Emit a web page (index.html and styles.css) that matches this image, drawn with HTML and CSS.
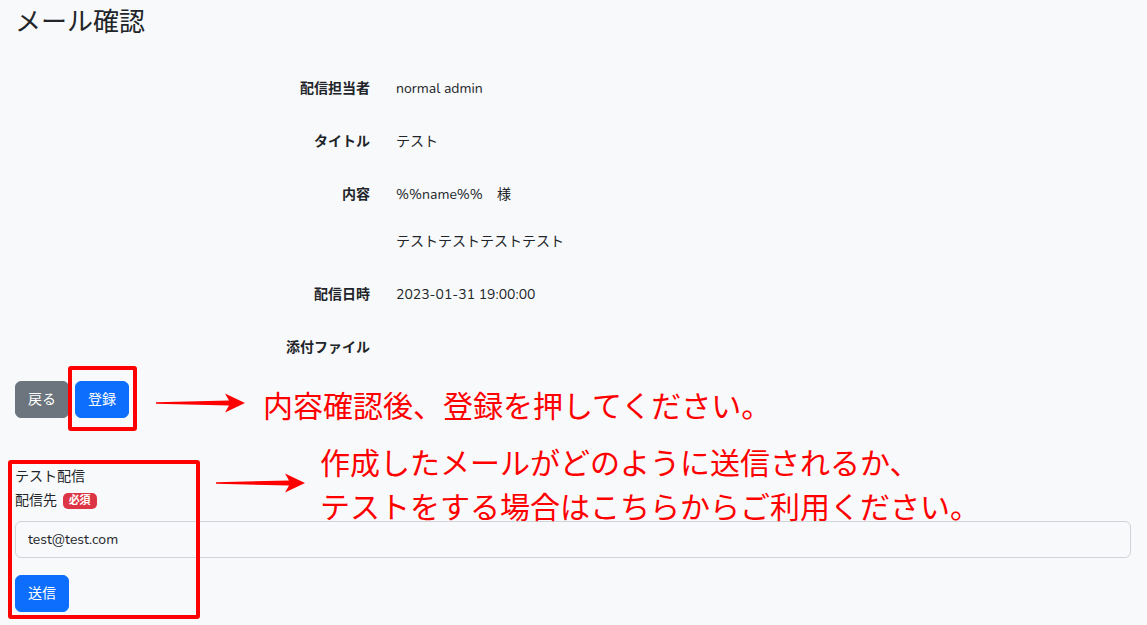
FILE: index.html
```html
<!DOCTYPE html>
<html lang="ja">
<head>
  <meta charset="UTF-8">
  <title>メール確認</title>
  <link rel="stylesheet" href="styles.css">
</head>
<body>

  <h1 class="page-title">メール確認</h1>

  <div class="confirm-list">
    <div class="label">配信担当者</div>
    <div class="value">normal admin</div>

    <div class="label">タイトル</div>
    <div class="value">テスト</div>

    <div class="label">内容</div>
    <div class="value">
      <p>%%name%%　様</p>
      <p>テストテストテストテスト</p>
    </div>

    <div class="label">配信日時</div>
    <div class="value">2023-01-31 19:00:00</div>

    <div class="label">添付ファイル</div>
    <div class="value"></div>
  </div>

  <div class="actions">
    <button class="btn btn-gray">戻る</button>
    <button class="btn btn-blue">登録</button>
  </div>

  <div class="test-send">
    <div class="line">テスト配信</div>
    <div class="line">配信先 <span class="badge">必須</span></div>
    <input type="text" class="input" value="test@test.com">
    <button class="btn btn-blue send">送信</button>
  </div>

  <!-- 注釈 -->
  <div class="mark mark-register"></div>
  <div class="mark mark-test"></div>

  <svg class="arrow arrow-1" width="90" height="22" viewBox="0 0 90 22">
    <path d="M0 10.2 L73 8.6 L69 1.5 L89 11 L69 20.5 L73 13.4 L0 11.8 Z" fill="#ff0000"/>
  </svg>
  <svg class="arrow arrow-2" width="90" height="22" viewBox="0 0 90 22">
    <path d="M0 10.2 L73 8.6 L69 1.5 L89 11 L69 20.5 L73 13.4 L0 11.8 Z" fill="#ff0000"/>
  </svg>

  <p class="note note-1">内容確認後、登録を押してください。</p>
  <p class="note note-2">作成したメールがどのように送信されるか、<br>テストをする場合はこちらからご利用ください。</p>

</body>
</html>
```

FILE: styles.css
```css
body {
  margin: 0;
  padding: 0 16px 20px 15px;
  background: #f8f9fa;
  color: #212529;
  font-family: "Nunito", "Lato", "Noto Sans CJK JP", sans-serif;
  font-size: 14px;
  line-height: 1.5;
  position: relative;
  min-height: 625px;
  box-sizing: border-box;
}

.page-title {
  margin: 0;
  padding-top: 7px;
  font-size: 26px;
  font-weight: 400;
  line-height: 31px;
}

.confirm-list {
  display: grid;
  grid-template-columns: 355px 1fr;
  column-gap: 26px;
  row-gap: 32px;
  margin-top: 40px;
  margin-bottom: 23px;
}

.label {
  text-align: right;
  font-weight: 700;
  line-height: 21px;
  min-height: 21px;
}

.value {
  line-height: 21px;
  min-height: 21px;
}

.value p {
  margin: 0 0 26px;
}

.value p:last-child {
  margin-bottom: 0;
}

.actions {
  display: flex;
  gap: 6px;
}

.btn {
  font-family: inherit;
  font-size: 14px;
  line-height: 21px;
  padding: 7px 12px;
  border: 1px solid transparent;
  border-radius: 6px;
  color: white;
  cursor: pointer;
}

.btn-gray {
  background: #6c757d;
  border-color: #6c757d;
}

.btn-blue {
  background: #0d6efd;
  border-color: #0d6efd;
}

.test-send {
  margin-top: 47px;
}

.line {
  line-height: 24px;
}

.badge {
  display: inline-block;
  margin-left: 2px;
  padding: 0 6px;
  background: #dc3545;
  color: white;
  font-size: 11px;
  font-weight: 700;
  line-height: 16px;
  border-radius: 5px;
  vertical-align: 1px;
}

.input {
  display: block;
  width: 100%;
  box-sizing: border-box;
  margin-top: 8px;
  padding: 7px 12px;
  font-family: inherit;
  font-size: 14px;
  line-height: 21px;
  color: #212529;
  background: #f8f9fa;
  border: 1px solid #ced4da;
  border-radius: 6px;
}

.send {
  margin-top: 17px;
}

/* 赤枠・矢印・説明 */
.mark {
  position: absolute;
  border: 4px solid #ff0000;
  border-radius: 3px;
  box-sizing: border-box;
}

.mark-register {
  left: 68px;
  top: 366px;
  width: 69px;
  height: 65px;
}

.mark-test {
  left: 8px;
  top: 460px;
  width: 192px;
  height: 159px;
}

.arrow {
  position: absolute;
}

.arrow-1 {
  left: 156px;
  top: 392px;
}

.arrow-2 {
  left: 216px;
  top: 472px;
}

.note {
  position: absolute;
  margin: 0;
  color: #ff0000;
  font-family: "Noto Sans CJK JP", sans-serif;
  font-size: 30px;
  font-weight: 400;
  white-space: nowrap;
}

.note-1 {
  left: 263px;
  top: 382px;
  line-height: 44px;
}

.note-2 {
  left: 320px;
  top: 439px;
  line-height: 44px;
}
```
